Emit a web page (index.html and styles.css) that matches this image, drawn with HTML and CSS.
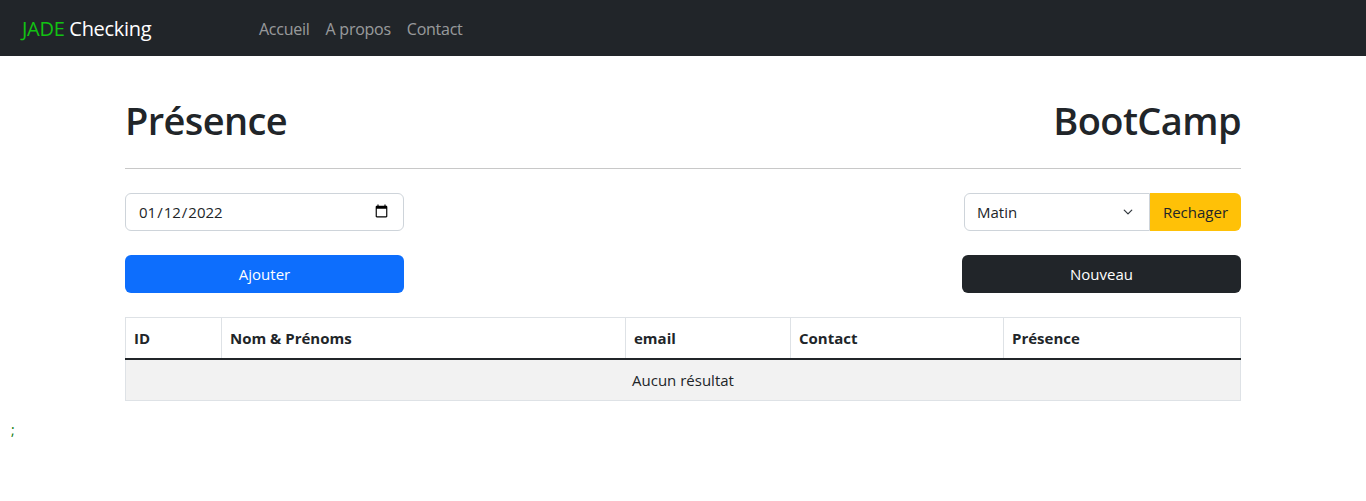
FILE: index.html
```html
<!DOCTYPE html>
<html lang="fr">
<head>
    <meta charset="UTF-8">
    <meta name="viewport" content="width=device-width, initial-scale=1.0">
    <title>JADE Checking - Présence</title>
    <link rel="stylesheet" href="styles.css">
</head>
<body>
    <nav class="navbar">
        <a class="brand" href="#"><span class="brand-green">JADE</span> Checking</a>
        <ul class="nav-links">
            <li><a href="#">Accueil</a></li>
            <li><a href="#">A propos</a></li>
            <li><a href="#">Contact</a></li>
        </ul>
    </nav>

    <div class="container">
        <div class="page-head">
            <h1>Présence</h1>
            <h1>BootCamp</h1>
        </div>
        <hr class="sep">

        <div class="toolbar">
            <input type="date" class="form-control date-input" value="2022-01-12">
            <div class="input-group">
                <select class="form-select">
                    <option>Matin</option>
                    <option>Soir</option>
                </select>
                <button class="btn btn-warning">Rechager</button>
            </div>
        </div>

        <div class="toolbar">
            <button class="btn btn-primary btn-wide">Ajouter</button>
            <button class="btn btn-dark btn-wide">Nouveau</button>
        </div>

        <table class="table">
            <thead>
                <tr>
                    <th class="col-id">ID</th>
                    <th class="col-nom">Nom &amp; Prénoms</th>
                    <th class="col-mail">email</th>
                    <th class="col-contact">Contact</th>
                    <th>Présence</th>
                </tr>
            </thead>
            <tbody>
                <tr class="empty-row">
                    <td colspan="5">Aucun résultat</td>
                </tr>
            </tbody>
        </table>
    </div>
    <div class="stray">;</div>
</body>
</html>
```

FILE: styles.css
```css
* {
    box-sizing: border-box;
}
body {
    margin: 0;
    font-family: "Open Sans", "Noto Sans", sans-serif;
    font-size: 16px;
    line-height: 1.5;
    color: #212529;
    background: #fff;
}
/* Navbar */
.navbar {
    background: #212529;
    height: 56px;
    display: flex;
    align-items: center;
    padding: 1px 22px 0 22px;
}
.brand {
    color: #fff;
    font-size: 20px;
    text-decoration: none;
    width: 229px;
    letter-spacing: -0.3px;
}
.brand-green {
    color: #12c212;
}
.nav-links {
    list-style: none;
    margin: 0;
    padding: 0;
    display: flex;
}
.nav-links a {
    display: block;
    padding: 8px 8px;
    color: rgba(255,255,255,0.55);
    text-decoration: none;
    font-size: 16px;
    letter-spacing: -0.25px;
}
/* Contenu */
.container {
    width: 1116px;
    margin: 0 auto;
}
.page-head {
    display: flex;
    justify-content: space-between;
    padding-top: 42px;
}
.page-head h1 {
    margin: 0;
    font-size: 38px;
    font-weight: 600;
    line-height: 1.2;
    letter-spacing: -0.6px;
}
.sep {
    border: none;
    border-top: 1px solid #c8c8c8;
    margin: 24px 0 24px 0;
}
.toolbar {
    display: flex;
    justify-content: space-between;
    margin-bottom: 24px;
}
.form-control,
.form-select {
    height: 38px;
    border: 1px solid #ced4da;
    border-radius: 6px;
    padding: 6px 12px;
    font-family: inherit;
    font-size: 15px;
    color: #212529;
    background: #fff;
}
.date-input {
    width: 279px;
}
.input-group {
    display: flex;
}
.form-select {
    width: 186px;
    border-radius: 6px 0 0 6px;
    appearance: none;
    background-image: url("data:image/svg+xml,%3csvg xmlns='http://www.w3.org/2000/svg' viewBox='0 0 16 16'%3e%3cpath fill='none' stroke='%23343a40' stroke-linecap='round' stroke-linejoin='round' stroke-width='2' d='m2 5 6 6 6-6'/%3e%3c/svg%3e");
    background-repeat: no-repeat;
    background-position: right 14px center;
    background-size: 14px 10px;
}
.btn {
    height: 38px;
    border: 1px solid transparent;
    border-radius: 6px;
    padding: 6px 12px;
    font-family: inherit;
    font-size: 15px;
    cursor: pointer;
}
.btn-warning {
    background: #ffc107;
    color: #212529;
    border-radius: 0 6px 6px 0;
    width: 91px;
    padding: 6px 0;
}
.btn-primary {
    background: #0d6efd;
    color: #fff;
}
.btn-dark {
    background: #212529;
    color: #fff;
}
.btn-wide {
    width: 279px;
}
/* Tableau */
.table {
    width: 100%;
    border-collapse: collapse;
    border: 1px solid #dee2e6;
}
.table th {
    text-align: left;
    padding: 8px 8px;
    font-weight: 700;
    font-size: 15px;
    border: 1px solid #dee2e6;
    border-bottom: 2px solid #212529;
    height: 42px;
}
.col-id { width: 96px; }
.col-nom { width: 404px; }
.col-mail { width: 165px; }
.col-contact { width: 213px; }
.empty-row td {
    background: #f2f2f2;
    text-align: center;
    padding: 8px;
    font-size: 15px;
    height: 41px;
    border-bottom: 1px solid #dee2e6;
}
.stray {
    color: #0a7a0a;
    padding: 18px 0 0 11px;
    font-size: 14px;
}
```
